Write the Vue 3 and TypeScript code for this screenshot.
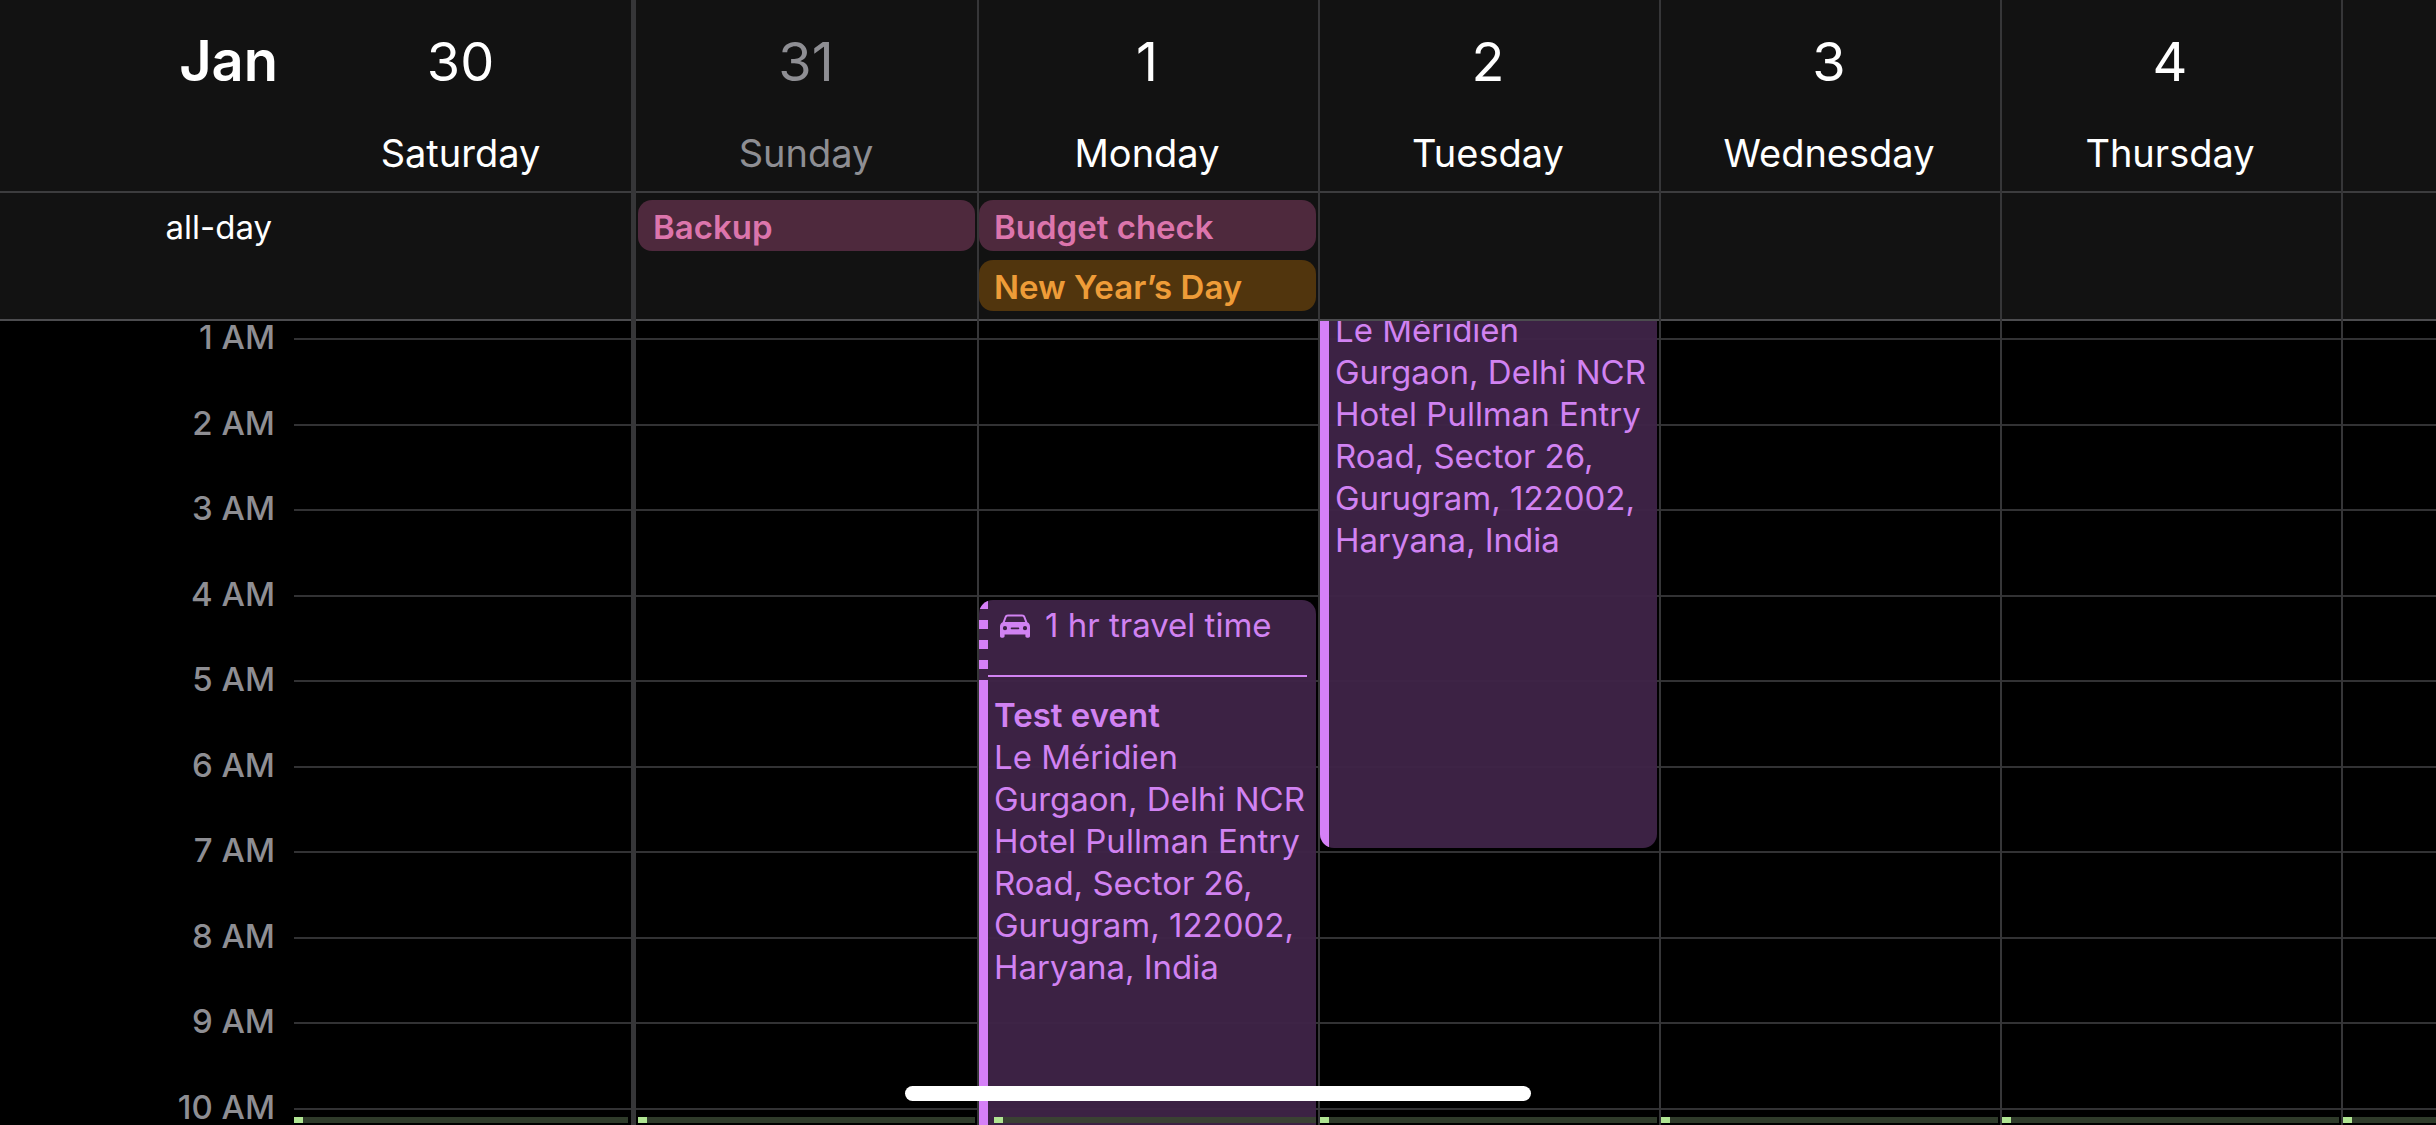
<script setup lang="ts">
interface AllDayEvent {
  title: string
  tone: 'pink' | 'orange'
}

interface TimedEvent {
  kind: 'continued' | 'travel'
  top: number
  height: number
  title?: string
  travel?: string
  place: string[]
}

interface Day {
  date: string
  name: string
  muted?: boolean
  allDay: AllDayEvent[]
  timed: TimedEvent[]
  busyInset?: boolean
}

const address: string[] = [
  'Le Méridien',
  'Gurgaon, Delhi NCR',
  'Hotel Pullman Entry',
  'Road, Sector 26,',
  'Gurugram, 122002,',
  'Haryana, India',
]

const days: Day[] = [
  { date: '30', name: 'Saturday', allDay: [], timed: [] },
  { date: '31', name: 'Sunday', muted: true, allDay: [{ title: 'Backup', tone: 'pink' }], timed: [] },
  {
    date: '1',
    name: 'Monday',
    allDay: [
      { title: 'Budget check', tone: 'pink' },
      { title: 'New Year’s Day', tone: 'orange' },
    ],
    timed: [
      { kind: 'travel', top: 279, height: 764, title: 'Test event', travel: '1 hr travel time', place: address },
    ],
    busyInset: true,
  },
  {
    date: '2',
    name: 'Tuesday',
    allDay: [],
    timed: [{ kind: 'continued', top: 0, height: 527, place: address }],
  },
  { date: '3', name: 'Wednesday', allDay: [], timed: [] },
  { date: '4', name: 'Thursday', allDay: [], timed: [] },
  { date: '', name: '', allDay: [], timed: [] },
]

const hours: string[] = Array.from({ length: 10 }, (_, i) => `${i + 1} AM`)
</script>

<template>
  <main class="calendar">
    <header class="head">
      <div class="row dates">
        <h1 class="month">Jan</h1>
        <div v-for="(day, i) in days" :key="i" class="date" :class="{ muted: day.muted }">
          <span class="number">{{ day.date }}</span>
          <span class="name">{{ day.name }}</span>
        </div>
      </div>
      <div class="row all-day">
        <span class="all-day-label">all-day</span>
        <div v-for="(day, i) in days" :key="i" class="chips">
          <div v-for="event in day.allDay" :key="event.title" class="chip" :class="event.tone">
            {{ event.title }}
          </div>
        </div>
      </div>
    </header>

    <section class="body">
      <div class="hours">
        <div v-for="hour in hours" :key="hour" class="hour">
          <span class="hour-label">{{ hour }}</span>
          <span class="hour-line"></span>
        </div>
      </div>
      <div class="row columns">
        <span></span>
        <div v-for="(day, i) in days" :key="i" class="column">
          <article
            v-for="(event, j) in day.timed"
            :key="j"
            class="event"
            :class="event.kind"
            :style="{ marginTop: event.top + 'px', height: event.height + 'px' }"
          >
            <div v-if="event.travel" class="travel-time">
              <svg class="car" viewBox="0 0 30 24" aria-hidden="true">
                <path
                  fill="currentColor"
                  fill-rule="evenodd"
                  d="M8 0.6h14c1.700 0 2.700 0.700 3.300 2.100l2.100 5.500c1.800 1 2.600 2.300 2.600 4.500v9.300c0 1-.7 1.700-1.700 1.700h-1.200c-1 0-1.700-.7-1.700-1.700v-1.600H4.600v1.600c0 1-.7 1.700-1.700 1.700H1.700C.7 23.700 0 23 0 22v-9.300c0-2.200.8-3.500 2.600-4.500l2.100-5.500C5.300 1.300 6.300.6 8 .6zM8.200 2.400c-.9 0-1.400.3-1.700 1.100L4.800 7.900h20.400l-1.700-4.400c-.3-.8-.8-1.100-1.700-1.100zM5 12.100a2.100 2.100 0 1 0 0 4.200 2.100 2.100 0 0 0 0-4.200zM25 12.100a2.100 2.100 0 1 0 0 4.200 2.100 2.100 0 0 0 0-4.200zM11.600 13.400a.9.9 0 0 0 0 1.800h6.800a.9.9 0 0 0 0-1.800z"
                />
              </svg>
              <span>{{ event.travel }}</span>
            </div>
            <div class="details">
              <h2 v-if="event.title" class="title">{{ event.title }}</h2>
              <p class="place">
                <span v-for="line in event.place" :key="line">{{ line }}</span>
              </p>
            </div>
          </article>
          <div class="busy" :class="{ inset: day.busyInset }"></div>
        </div>
      </div>
    </section>

    <div class="row rules" aria-hidden="true">
      <span></span>
      <span v-for="(_, i) in days" :key="i" class="rule"></span>
    </div>
    <div class="home-indicator"></div>
  </main>
</template>

<style>
body {
  margin: 0;
  background: #000;
}
</style>

<style scoped>
.calendar {
  position: relative;
  display: flex;
  flex-direction: column;
  height: 100vh;
  overflow: hidden;
  background: #000;
  color: #fff;
  font-family: Inter, 'Liberation Sans', sans-serif;
  font-size: 33px;
  line-height: 42px;
}

.row {
  display: grid;
  grid-template-columns:
    294px minmax(0, 344fr) repeat(5, minmax(0, 341fr))
    minmax(0, 93fr);
}

.head {
  background: #121212;
}

.dates {
  padding: 29px 0 14px;
  border-bottom: 2px solid #3c3c3e;
}

.month {
  margin: 0;
  padding-right: 16px;
  font-size: 56px;
  font-weight: 600;
  line-height: 64px;
  text-align: right;
}

.date {
  display: flex;
  flex-direction: column;
  align-items: center;
  gap: 34px;
  padding-right: 5px;
}

.date:nth-child(2) {
  padding-right: 11px;
}

.number {
  font-size: 54px;
  line-height: 66px;
}

.name {
  font-size: 38px;
  line-height: 48px;
}

.muted {
  color: #8e8e93;
}

.all-day {
  padding: 7px 0 8px;
  border-bottom: 2px solid #4c4c4f;
}

.all-day-label {
  padding: 4px 22px 0 0;
  line-height: 47px;
  text-align: right;
}

.chips {
  display: flex;
  flex-direction: column;
  gap: 9px;
  min-height: 111px;
  padding-right: 4px;
}

.chip {
  padding: 4px 0 0 15px;
  border-radius: 14px;
  font-weight: 600;
  line-height: 47px;
  white-space: nowrap;
}

.pink {
  background: #4e293d;
  color: #dc75ac;
}

.orange {
  background: #51350d;
  color: #ee9c38;
}

.body {
  display: grid;
  flex: 1 1 0;
  min-height: 0;
  overflow: hidden;
}

.hours,
.columns {
  grid-area: 1 / 1;
  min-height: 0;
}

.hours {
  padding-top: 17px;
}

.hour {
  display: flex;
  height: 86px;
}

.hour:nth-child(even) {
  height: 85px;
}

.hour-label {
  flex: none;
  box-sizing: border-box;
  width: 294px;
  height: 34px;
  margin-top: -18px;
  padding-right: 19px;
  color: #8e8e93;
  font-weight: 500;
  line-height: 34px;
  text-align: right;
}

.hour-line {
  flex: 1;
  height: 2px;
  background: #323234;
}

.column {
  position: relative;
  padding-right: 4px;
}

.event {
  display: flex;
  flex-direction: column;
  overflow: hidden;
  border-radius: 14px;
  background: rgba(62, 35, 71, 0.96);
  color: #d182f2;
}

.continued {
  border-radius: 0 0 14px 14px;
}

.travel-time {
  position: relative;
  display: flex;
  gap: 15px;
  box-sizing: border-box;
  height: 80px;
  padding: 4px 0 0 21px;
  background: repeating-linear-gradient(#d580f7 0 9px, transparent 9px 20px) 0 0 / 9px 100% no-repeat;
}

.travel-time::after {
  position: absolute;
  right: 9px;
  bottom: 3px;
  left: 9px;
  height: 2px;
  background: #d182f2;
  content: '';
}

.car {
  width: 30px;
  height: 24px;
  margin-top: 10px;
}

.details {
  flex: 1;
  padding: 14px 0 0 6px;
  border-left: 9px solid #d580f7;
}

.continued .details {
  padding-top: 0;
}

.continued .place {
  margin-top: -12px;
}

.title {
  margin: 0;
  font-size: 33px;
  font-weight: 600;
}

.place {
  display: flex;
  flex-direction: column;
  margin: 0;
  white-space: nowrap;
}

.busy {
  position: absolute;
  top: 796px;
  right: 4px;
  left: 0;
  height: 6px;
  background: linear-gradient(#b0e592 0 0) 0 0 / 9px 100% no-repeat #2f3b2a;
}

.busy.inset {
  left: 15px;
  background-color: #3a4133;
}

.column:nth-child(2) .busy {
  right: 10px;
}

.column:last-child .busy {
  right: 0;
}

.rules {
  position: absolute;
  inset: 0;
  pointer-events: none;
}

.rule {
  border-right: 2px solid #363638;
}

.rule:nth-child(2) {
  margin-right: 2px;
  border-right-width: 5px;
}

.rule:last-child {
  border-right: 0;
}

.home-indicator {
  position: absolute;
  bottom: 24px;
  left: 50%;
  width: 626px;
  height: 15px;
  margin-left: -313px;
  border-radius: 8px;
  background: #fff;
}
</style>
